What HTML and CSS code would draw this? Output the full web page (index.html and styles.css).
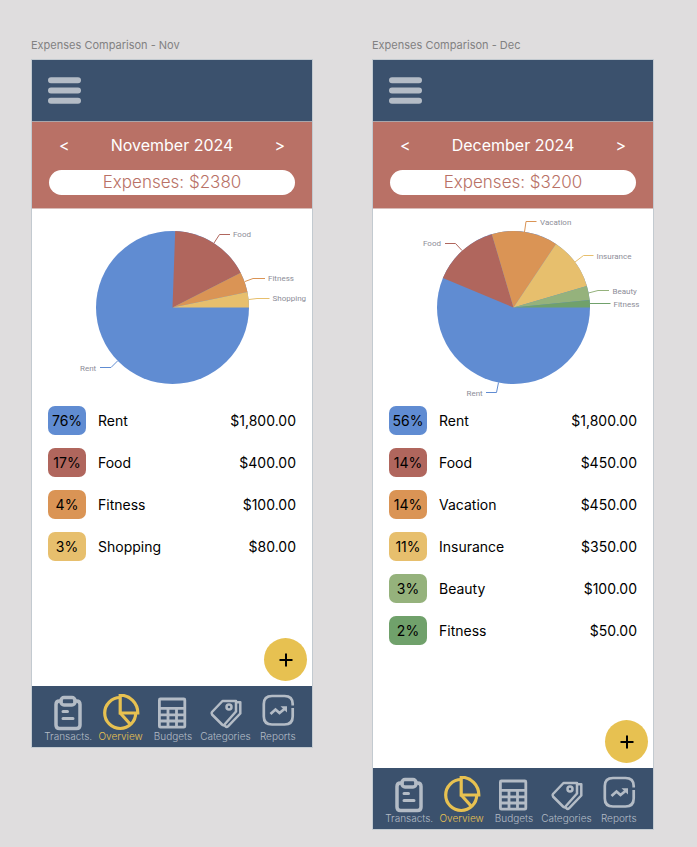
FILE: index.html
```html
<!DOCTYPE html>
<html lang="en">
<head>
<meta charset="utf-8">
<meta name="viewport" content="width=device-width, initial-scale=1">
<title>Expenses Comparison</title>
<link rel="stylesheet" href="styles.css">
</head>
<body>
<svg class="sprite" aria-hidden="true">
  <symbol id="i-menu" viewBox="0 0 33 27"><g stroke="currentColor" stroke-width="6" stroke-linecap="round"><path d="M3 3.300H30M3 13.500H30M3 23.700H30"/></g></symbol>
  <symbol id="i-transacts" viewBox="0 0 40 37"><g fill="none" stroke="currentColor" stroke-width="3.500" stroke-linecap="round" stroke-linejoin="round"><path d="M13 7H11.500Q8 7 8 10.500V31Q8 34.500 11.500 34.500H28.500Q32 34.500 32 31V10.500Q32 7 28.500 7H27"/><rect x="13" y="3.500" width="14" height="7.500" rx="3"/><path stroke-width="3" d="M15 17.500H19.500M15 24.500H25"/></g></symbol>
  <symbol id="i-overview" viewBox="0 0 40 37"><g fill="none" stroke="currentColor" stroke-width="3.200"><path d="M19.200 3.500A15.500 15.500 0 1 0 34.700 19"/><path d="M19.200 1.200V19H36.800A17.600 17.800 0 0 0 19.200 1.200Z"/><path d="M19.200 19L29.500 30.500"/></g></symbol>
  <symbol id="i-budgets" viewBox="0 0 40 37"><g fill="none" stroke="currentColor" stroke-width="2.800"><rect x="6.400" y="5" width="25.400" height="28.200" rx="1"/><path d="M6 14.300H32M6 20.800H32M6 27H32M15 14.300V33M23.500 14.300V33"/></g></symbol>
  <symbol id="i-categories" viewBox="0 0 40 37"><g fill="none" stroke="currentColor" stroke-width="2.500" stroke-linejoin="round"><path d="M17.500 7H31V17.500L19.500 30.500Q18.300 31.800 17 30.500L7 20.500Q6 19.300 7 18Z"/><path d="M31 8.200H35.300V19.500L23 32.300Q21.700 33.500 20.500 32.300L18.500 31"/><circle cx="24" cy="13" r="2.500"/></g></symbol>
  <symbol id="i-reports" viewBox="0 0 40 37"><g fill="none" stroke="currentColor" stroke-width="2.700"><path d="M34.700 11.500V10Q34.700 2 26.500 2H14Q5.800 2 5.800 10V22.500Q5.800 30.500 14 30.500H26.500Q34.700 30.500 34.700 22.500V14"/><path d="M12.500 20L17.500 15.500L21.500 19L27 14.500"/><path fill="currentColor" stroke="none" d="M22.500 12.300H29V18.500Z"/></g></symbol>
</svg>
<main class="board">
  <section class="frame">
    <h1 class="frame-title">Expenses Comparison - Nov</h1>
    <div class="screen">
      <header class="topbar"><button class="menu" aria-label="Menu"><svg><use href="#i-menu"/></svg></button></header>
      <div class="summary">
        <div class="month"><button aria-label="Previous month">&lt;</button><h2>November 2024</h2><button aria-label="Next month">&gt;</button></div>
        <p class="total">Expenses: $2380</p>
      </div>
      <svg class="chart" viewBox="0 0 280 191" role="img" aria-label="November expenses by category">
        <circle class="c-blue" cx="140.500" cy="98.500" r="76.500"/>
        <path class="c-red" d="M140.500 98.500L143.200 22A76.500 76.500 0 0 1 208.700 63.800Z"/>
        <path class="c-orange" d="M140.500 98.500L208.700 63.800A76.500 76.500 0 0 1 215.500 83Z"/>
        <path class="c-yellow" d="M140.500 98.500L215.500 83A76.500 76.500 0 0 1 217 98.500Z"/>
        <g class="leader">
          <path class="s-red" d="M182 34L187.500 25.500H198"/>
          <path class="s-orange" d="M213 72.500L221 69.500H233"/>
          <path class="s-yellow" d="M217 90.500L225 89.500H237.500"/>
          <path class="s-blue" d="M85.500 152L79 158.500H68"/>
        </g>
        <g class="label"><text x="201" y="28">Food</text><text x="236" y="72">Fitness</text><text x="240.500" y="92">Shopping</text><text x="48" y="161.500">Rent</text></g>
      </svg>
      <table class="list">
        <tr><td><span class="pct blue">76%</span></td><th scope="row">Rent</th><td class="amount">$1,800.00</td></tr>
        <tr><td><span class="pct red">17%</span></td><th scope="row">Food</th><td class="amount">$400.00</td></tr>
        <tr><td><span class="pct orange">4%</span></td><th scope="row">Fitness</th><td class="amount">$100.00</td></tr>
        <tr><td><span class="pct yellow">3%</span></td><th scope="row">Shopping</th><td class="amount">$80.00</td></tr>
      </table>
      <div class="action"><button class="add" aria-label="Add expense"><svg viewBox="0 0 14 14"><path d="M7 0.500V13.500M0.500 7H13.500"/></svg></button></div>
      <nav class="tabs">
        <a href="#"><svg><use href="#i-transacts"/></svg>Transacts.</a>
        <a href="#" class="active" aria-current="page"><svg><use href="#i-overview"/></svg>Overview</a>
        <a href="#"><svg><use href="#i-budgets"/></svg>Budgets</a>
        <a href="#"><svg><use href="#i-categories"/></svg>Categories</a>
        <a href="#"><svg><use href="#i-reports"/></svg>Reports</a>
      </nav>
    </div>
  </section>
  <section class="frame">
    <h1 class="frame-title">Expenses Comparison - Dec</h1>
    <div class="screen">
      <header class="topbar"><button class="menu" aria-label="Menu"><svg><use href="#i-menu"/></svg></button></header>
      <div class="summary">
        <div class="month"><button aria-label="Previous month">&lt;</button><h2>December 2024</h2><button aria-label="Next month">&gt;</button></div>
        <p class="total">Expenses: $3200</p>
      </div>
      <svg class="chart" viewBox="0 0 280 191" role="img" aria-label="December expenses by category">
        <circle class="c-blue" cx="140.500" cy="98.500" r="76.500"/>
        <path class="c-red" d="M140.500 98.500L69.900 69A76.500 76.500 0 0 1 118.800 25.200Z"/>
        <path class="c-orange" d="M140.500 98.500L118.800 25.200A76.500 76.500 0 0 1 183 34.900Z"/>
        <path class="c-yellow" d="M140.500 98.500L183 34.900A76.500 76.500 0 0 1 213.900 77Z"/>
        <path class="c-lime" d="M140.500 98.500L213.900 77A76.500 76.500 0 0 1 216.700 91Z"/>
        <path class="c-green" d="M140.500 98.500L216.700 91A76.500 76.500 0 0 1 217 98.500Z"/>
        <g class="leader">
          <path class="s-red" d="M89 41.500L82.500 34.500H72"/>
          <path class="s-orange" d="M151.500 23L153 12.500H163.500"/>
          <path class="s-yellow" d="M202 53L210.500 46.500H220.500"/>
          <path class="s-lime" d="M215.500 84L225 81.500H236"/>
          <path class="s-green" d="M217 94.500H237.500"/>
          <path class="s-blue" d="M125.500 173.500L123.500 183.500H113"/>
        </g>
        <g class="label"><text x="50" y="37">Food</text><text x="167" y="16">Vacation</text><text x="223.500" y="50">Insurance</text><text x="239.500" y="85">Beauty</text><text x="240.500" y="97.500">Fitness</text><text x="93.500" y="187">Rent</text></g>
      </svg>
      <table class="list">
        <tr><td><span class="pct blue">56%</span></td><th scope="row">Rent</th><td class="amount">$1,800.00</td></tr>
        <tr><td><span class="pct red">14%</span></td><th scope="row">Food</th><td class="amount">$450.00</td></tr>
        <tr><td><span class="pct orange">14%</span></td><th scope="row">Vacation</th><td class="amount">$450.00</td></tr>
        <tr><td><span class="pct yellow">11%</span></td><th scope="row">Insurance</th><td class="amount">$350.00</td></tr>
        <tr><td><span class="pct lime">3%</span></td><th scope="row">Beauty</th><td class="amount">$100.00</td></tr>
        <tr><td><span class="pct green">2%</span></td><th scope="row">Fitness</th><td class="amount">$50.00</td></tr>
      </table>
      <div class="action"><button class="add" aria-label="Add expense"><svg viewBox="0 0 14 14"><path d="M7 0.500V13.500M0.500 7H13.500"/></svg></button></div>
      <nav class="tabs">
        <a href="#"><svg><use href="#i-transacts"/></svg>Transacts.</a>
        <a href="#" class="active" aria-current="page"><svg><use href="#i-overview"/></svg>Overview</a>
        <a href="#"><svg><use href="#i-budgets"/></svg>Budgets</a>
        <a href="#"><svg><use href="#i-categories"/></svg>Categories</a>
        <a href="#"><svg><use href="#i-reports"/></svg>Reports</a>
      </nav>
    </div>
  </section>
</main>
</body>
</html>
```

FILE: styles.css
```css
:root {
  --navy: #3b516d;
  --brick: #b97166;
  --mist: #b4bcc6;
  --gold: #e7c151;
  --blue: #608cd2;
  --red: #b0665d;
  --orange: #da9455;
  --yellow: #e7bf6d;
  --lime: #95b27c;
  --green: #70a16b;
}
* { box-sizing: border-box; }
body {
  margin: 0;
  min-height: 100vh;
  background: #dfddde;
  color: #000;
  font-family: Inter, "Liberation Sans", sans-serif;
}
h1, h2, p { margin: 0; font-weight: 400; }
button { padding: 0; border: 0; background: none; color: inherit; font: inherit; cursor: pointer; }
.sprite { position: absolute; width: 0; height: 0; }

.board {
  display: grid;
  grid-template-columns: 1fr 1fr;
  gap: 59px;
  align-items: start;
  padding: 37px 43px 18px 31px;
}
.frame-title { height: 22px; font-size: 11px; line-height: 16px; color: #828182; }
.screen { display: flex; flex-direction: column; min-height: 689px; border: 1px solid #c3cad0; background: #fff; }

.topbar { display: flex; align-items: center; height: 61px; padding: 0 16px; background: var(--navy); color: var(--mist); }
.menu svg { display: block; width: 33px; height: 27px; }

.summary { padding: 11px 17px 13px; border-top: 1px solid #a9a5aa; border-bottom: 1px solid #d9bdb9; background: var(--brick); color: #fff; }
.month { display: flex; align-items: center; justify-content: space-between; height: 24px; padding: 0 10px; font-size: 16px; line-height: 24px; }
.month h2 { font-size: 16px; }
.total { margin-top: 13px; border-radius: 13px; background: #fff; color: var(--brick); font-size: 17px; font-weight: 300; line-height: 25px; text-align: center; }

.chart { display: block; width: 100%; }
.c-blue { fill: var(--blue); }
.c-red { fill: var(--red); }
.c-orange { fill: var(--orange); }
.c-yellow { fill: var(--yellow); }
.c-lime { fill: var(--lime); }
.c-green { fill: var(--green); }
.leader { fill: none; stroke-width: 1; }
.s-blue { stroke: var(--blue); }
.s-red { stroke: var(--red); }
.s-orange { stroke: var(--orange); }
.s-yellow { stroke: var(--yellow); }
.s-lime { stroke: var(--lime); }
.s-green { stroke: var(--green); }
.label { fill: #8d8d98; font-family: Roboto, Inter, sans-serif; font-size: 8px; }

.list { width: 100%; border-collapse: collapse; font-size: 14px; line-height: 29px; }
.list td, .list th { padding: 6px 0 7px; font-weight: 400; text-align: left; }
.list td:first-child { width: 66px; padding-left: 16px; }
.list .amount { padding-right: 16px; text-align: right; }
.pct { display: block; width: 38px; border-radius: 7px; text-align: center; }
.blue { background: var(--blue); }
.red { background: var(--red); }
.orange { background: var(--orange); }
.yellow { background: var(--yellow); }
.lime { background: var(--lime); }
.green { background: var(--green); }

.action { display: flex; justify-content: flex-end; margin-top: auto; padding: 68px 5px 5px; }
.add { display: grid; place-items: center; width: 43px; height: 43px; border-radius: 50%; background: var(--gold); }
.add svg { width: 14px; height: 14px; stroke: #000; stroke-width: 2; }

.tabs { display: grid; grid-template-columns: repeat(5, 1fr); height: 61px; padding: 8px 8px 0 10px; background: var(--navy); }
.tabs a { display: flex; flex-direction: column; align-items: center; color: var(--mist); font-size: 10px; font-weight: 300; line-height: 10px; text-decoration: none; }
.tabs svg { width: 40px; height: 37px; }
.tabs .active { color: var(--gold); }
```
